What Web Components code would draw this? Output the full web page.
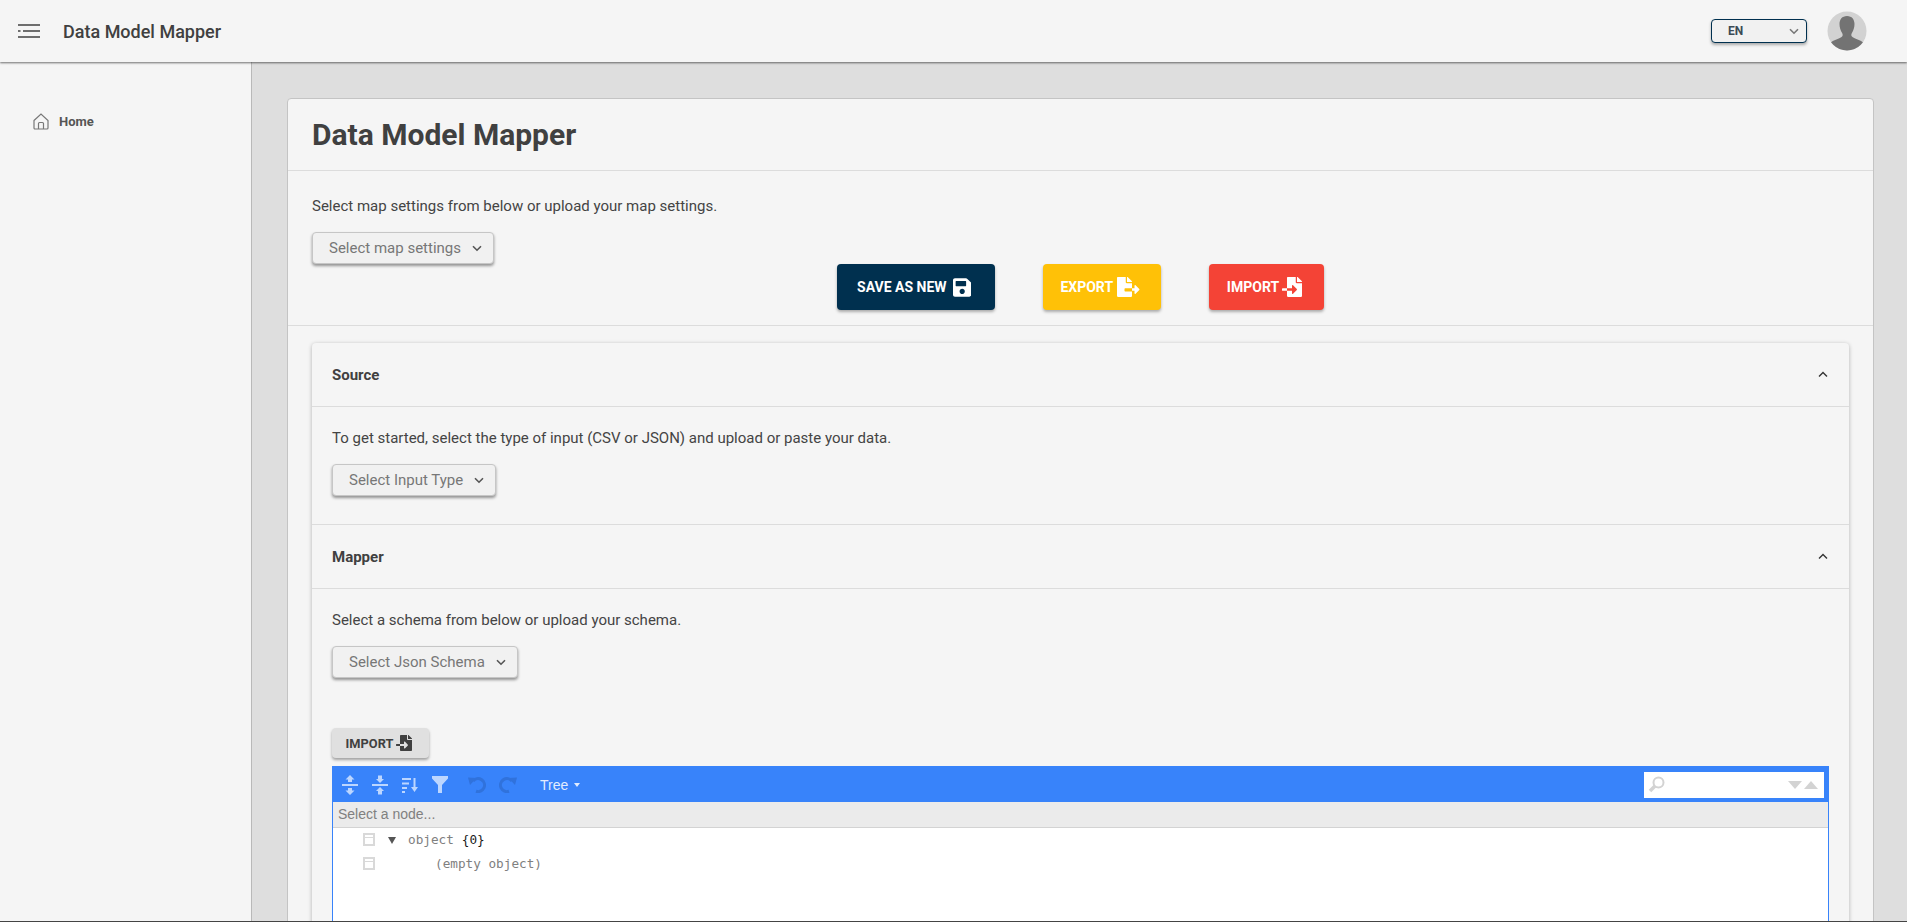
<!DOCTYPE html>
<html lang="en"><head><meta charset="utf-8"><title>Data Model Mapper</title>
<style>
html,body{margin:0;padding:0;height:922px;overflow:hidden;background:#dedede;font-family:Roboto,"Liberation Sans",sans-serif;color:#404040}
</style></head><body>
<app-shell>
  <app-header slot="header" title-text="Data Model Mapper"></app-header>
  <side-nav slot="nav"></side-nav>
  <page-card slot="main" heading="Data Model Mapper">
    <settings-bar></settings-bar>
    <accordion-group>
      <accordion-panel heading="Source" pad-bottom="28">
        <p>To get started, select the type of input (CSV or JSON) and upload or paste your data.</p>
        <select-box label="Select Input Type" width="164"></select-box>
      </accordion-panel>
      <accordion-panel heading="Mapper" pad-bottom="0">
        <p>Select a schema from below or upload your schema.</p>
        <select-box label="Select Json Schema" width="186"></select-box>
        <light-button></light-button>
        <json-editor></json-editor>
      </accordion-panel>
    </accordion-group>
  </page-card>
</app-shell>
<script>
const ICON={
save:['0 0 448 512','M433.941 129.941l-83.882-83.882A48 48 0 0 0 316.118 32H48C21.49 32 0 53.49 0 80v352c0 26.51 21.49 48 48 48h352c26.51 0 48-21.49 48-48V163.882a48 48 0 0 0-14.059-33.941zM224 416c-35.346 0-64-28.654-64-64 0-35.346 28.654-64 64-64s64 28.654 64 64c0 35.346-28.654 64-64 64zm96-304.52V212c0 6.627-5.373 12-12 12H76c-6.627 0-12-5.373-12-12V108c0-6.627 5.373-12 12-12h228.52c3.183 0 6.235 1.264 8.485 3.515l3.48 3.48A11.996 11.996 0 0 1 320 111.48z'],
exp:['0 0 576 512','M384 121.9c0-6.3-2.5-12.4-7-16.9L279.1 7c-4.5-4.5-10.6-7-17-7H256v128h128zM571 308l-95.7-96.4c-10.1-10.1-27.4-3-27.4 11.3V288h-64v64h64v65.2c0 14.3 17.3 21.4 27.4 11.3L571 332c6.6-6.6 6.6-17.4 0-24zm-379 28v-32c0-8.8 7.2-16 16-16h176V160H248c-13.2 0-24-10.8-24-24V0H24C10.7 0 0 10.7 0 24v464c0 13.3 10.7 24 24 24h336c13.3 0 24-10.7 24-24V368H208c-8.8 0-16-7.2-16-16z'],
imp:['0 0 512 512','M16 288c-8.8 0-16 7.2-16 16v32c0 8.8 7.2 16 16 16h112v-64zm489-183L407.1 7c-4.5-4.5-10.6-7-17-7H384v128h128v-6.1c0-6.3-2.5-12.4-7-16.9zm-153 31V0H152c-13.3 0-24 10.7-24 24v264h128v-65.2c0-14.3 17.3-21.4 27.3-11.3L379 308c6.6 6.7 6.6 17.4 0 24l-95.7 96.4c-10.1 10.1-27.4 3-27.4-11.3V352H128v136c0 13.3 10.7 24 24 24h336c13.3 0 24-10.7 24-24V160H376c-13.2 0-24-10.8-24-24z']
};
const icon=(n,h)=>{const [v,d]=ICON[n];const w=h*parseInt(v.split(' ')[2])/512;return `<svg width="${w}" height="${h}" viewBox="${v}" fill="currentColor" aria-hidden="true"><path d="${d}"/></svg>`};
const chevron=(c='#555')=>`<svg width="10" height="7" viewBox="0 0 10 7" fill="none" stroke="${c}" stroke-width="1.6" aria-hidden="true"><path d="M1 1.2l4 4 4-4"/></svg>`;
function def(name,render){customElements.define(name,class extends HTMLElement{connectedCallback(){if(this.shadowRoot)return;const r=this.attachShadow({mode:'open'});r.innerHTML=render(this)}})}

def('app-shell',()=>`<style>
:host{display:grid;grid-template-columns:252px 1fr;grid-template-rows:62px 860px;height:922px;box-sizing:border-box;border-bottom:1px solid #444;overflow:hidden}
.h{grid-column:1/3;position:relative;z-index:2}
.n{position:relative;z-index:1}
.m{min-width:0}
</style><div class="h"><slot name="header"></slot></div><div class="n"><slot name="nav"></slot></div><div class="m"><slot name="main"></slot></div>`);

def('app-header',e=>`<style>
:host{display:flex;align-items:center;height:62px;background:#f5f5f5;box-shadow:0 1px 2px rgba(0,0,0,.55);font-family:Roboto,sans-serif}
.t{font-size:18px;font-weight:500;color:#404040;margin-left:23px;flex:1}
.b{margin-left:18px;display:block}
.l{width:96px;height:24px;box-sizing:border-box;border:1px solid #00304f;border-radius:4px;background:#f1f1f1;display:flex;align-items:center;justify-content:space-between;padding:0 7px 0 16px;font-size:12px;font-weight:700;color:#3c4a55;box-shadow:0 2px 3px rgba(0,0,0,.3)}
.a{margin:0 40px 0 20px;display:block}
</style>
<svg class="b" width="22" height="14" viewBox="0 0 22 14" aria-hidden="true"><g fill="#6e6e6e"><rect width="22" height="2" y="0"/><rect x="0" y="6" width="2.5" height="2"/><rect x="5" y="6" width="17" height="2"/><rect y="12" width="22" height="2"/></g></svg>
<div class="t">${e.getAttribute('title-text')}</div>
<div class="l"><span>EN</span>${chevron('#777')}</div>
<svg class="a" width="40" height="40" viewBox="0 0 40 40" aria-hidden="true"><circle cx="20" cy="20" r="19.5" fill="#d2d2d2"/><clipPath id="c"><circle cx="20" cy="20" r="19.5"/></clipPath><g clip-path="url(#c)" fill="#737373"><path d="M20 5c-5 0-7.5 3.6-7.5 8 0 3.4 1 6.6 2.6 9 .8 1.2.8 2.7 0 3.6-1.8 2-9.6 3.8-11.6 6.4L3 40h34l-.5-8c-2-2.6-9.8-4.4-11.6-6.4-.8-.9-.8-2.4 0-3.6 1.6-2.4 2.6-5.6 2.6-9 0-4.4-2.5-8-7.5-8z"/></g></svg>`);

def('side-nav',()=>`<style>
:host{display:block;height:860px;box-sizing:border-box;background:#f5f5f5;border-right:1px solid #b9b9b9;padding:51px 0 0 33px;font-family:Roboto,sans-serif}
.r{display:flex;align-items:center;gap:10px;font-size:13px;font-weight:700;color:#555}
svg{display:block}
</style><div class="r"><svg width="16" height="17" viewBox="0 0 16 17" fill="none" stroke="#777" stroke-width="1.2" aria-hidden="true"><path d="M1 7.5L8 1l7 6.5V15a1 1 0 0 1-1 1H2a1 1 0 0 1-1-1z"/><path d="M5.5 16v-5.5a1 1 0 0 1 1-1h3a1 1 0 0 1 1 1V16"/></svg><span>Home</span></div>`);

def('page-card',e=>`<style>
:host{display:block;box-sizing:border-box;margin:36px 33px 0 35px;height:900px;background:#f5f5f5;border:1px solid #c4c4c4;border-radius:4px;font-family:Roboto,sans-serif}
h1{margin:0;height:72px;box-sizing:border-box;padding:0 24px;display:flex;align-items:center;font-size:30px;font-weight:700;color:#404040;border-bottom:1px solid #dcdcdc}
</style><h1>${e.getAttribute('heading')}</h1><slot></slot>`);

def('settings-bar',()=>`<style>
:host{display:block;padding:25px 24px 0;height:155px;box-sizing:border-box;border-bottom:1px solid #dcdcdc;font-family:Roboto,sans-serif}
p{margin:0 0 16px;font-size:15px;line-height:20px;color:#444}
.row{display:flex;justify-content:center;gap:48px}
</style><p>Select map settings from below or upload your map settings.</p>
<select-box label="Select map settings" width="182"></select-box>
<div class="row">
<action-button bg="#00304f" w="158" text="SAVE AS NEW" icon="save" gap="6" ih="21"></action-button>
<action-button bg="#ffc107" w="118" text="EXPORT" icon="exp" gap="4" ih="20"></action-button>
<action-button bg="#f44336" w="115" text="IMPORT" icon="imp" gap="3" ih="20"></action-button>
</div>`);

def('select-box',e=>`<style>
:host{display:block;width:${e.getAttribute('width')}px;height:32px;box-sizing:border-box;border:1px solid #c6c6c6;border-radius:4px;background:#f1f1f1;box-shadow:0 2px 3px rgba(0,0,0,.4);font-family:Roboto,sans-serif}
.i{display:flex;height:100%;align-items:center;justify-content:space-between;padding:0 11px 0 16px;font-size:15px;color:#777}
</style><div class="i"><span>${e.getAttribute('label')}</span>${chevron('#555')}</div>`);

def('action-button',e=>`<style>
:host{display:flex;align-items:center;justify-content:center;box-sizing:border-box;padding-right:4px;gap:${e.getAttribute('gap')}px;width:${e.getAttribute('w')}px;height:46px;background:${e.getAttribute('bg')};color:#fff;border-radius:4px;box-shadow:0 2px 3px rgba(0,0,0,.3);font:700 14px Roboto,sans-serif}
svg{display:block}
</style><span>${e.getAttribute('text')}</span>${icon(e.getAttribute('icon'),+e.getAttribute('ih'))}`);

def('light-button',()=>`<style>
:host{display:flex;align-items:center;justify-content:center;box-sizing:border-box;padding-right:3px;gap:3px;width:97px;height:30px;background:#e0e0e0;color:#404040;border-radius:4px;box-shadow:0 2px 3px rgba(0,0,0,.35);font:700 12.8px Roboto,sans-serif;margin-top:50px}
svg{display:block}
</style><span>IMPORT</span>${icon('imp',16)}`);

def('accordion-group',()=>`<style>
:host{display:block;margin:17px 24px 0 24px;background:#f5f5f5;border-radius:4px;box-shadow:0 1px 4px rgba(0,0,0,.28);font-family:Roboto,sans-serif}
</style><slot></slot>`);

def('accordion-panel',e=>`<style>
:host{display:block;border-bottom:1px solid #dcdcdc}
:host(:last-child){border-bottom:0}
.h{height:64px;box-sizing:border-box;border-bottom:1px solid #dcdcdc;padding:0 21px 0 20px;display:flex;align-items:center;justify-content:space-between;font-size:15px;font-weight:700;color:#404040}
.b{padding:20px 20px ${e.getAttribute('pad-bottom')}px 20px}
::slotted(p){margin:0 0 15px;font-size:15px;line-height:22px;color:#444}
</style><div class="h"><span>${e.getAttribute('heading')}</span><svg width="10" height="7" viewBox="0 0 10 7" fill="none" stroke="#333" stroke-width="1.4" aria-hidden="true"><path d="M1 5.5l4-4 4 4"/></svg></div><div class="b"><slot></slot></div>`);

def('json-editor',()=>`<style>
:host{display:block;margin-top:8px;height:400px;box-sizing:border-box;border:1px solid #3883fa;background:#fff;font-family:"Liberation Sans",Arial,sans-serif}
.bar{height:35px;background:#3883fa;margin:0 -1px 0;display:flex;align-items:center;padding-left:10px}
.bar svg{display:block;flex:none}
.tree-btn{color:#fff;opacity:.85;font-size:14px;margin-left:23px;display:flex;align-items:center;gap:6px}
.caret{width:0;height:0;border:3px solid transparent;border-top:4px solid #fff;border-bottom:0}
.search{margin-left:auto;margin-right:5px;width:180px;height:26px;background:#fff;display:flex;align-items:center;justify-content:space-between;padding:0 6px 0 4px;box-sizing:border-box}
.arrows{display:flex;gap:2px}
.nav{height:26px;box-sizing:border-box;background:#ebebeb;border-bottom:1px solid #d3d3d3;color:#808080;font-size:14px;line-height:25px;padding-left:5px}
.tree{margin-top:-1px}
.row{height:24px;display:flex;align-items:center;font:12.7px "DejaVu Sans Mono",monospace;color:#808080;padding-left:30px}
.cb{width:8px;height:9px;border:2px solid #d9d9d9;background:linear-gradient(#d9d9d9,#d9d9d9) 0 2px/100% 1px no-repeat;flex:none}
.tri{width:0;height:0;border:4.5px solid transparent;border-top:7px solid #555;border-bottom:0;margin:2px 0 0 13px;flex:none}
.key{margin-left:12px}
.n{color:#1a1a1a;margin-left:8px}
.e{margin-left:60px}
</style>
<div class="bar">
<svg width="16" height="22" viewBox="0 0 16 22" fill="#bcd6ff" aria-hidden="true"><path d="M8 1l4.5 4.5H10V8H6V5.5H3.5zM8 21l4.5-4.500H10V14H6v2.500H3.500z"/><rect y="10" width="16" height="2"/></svg>
<svg style="margin-left:14px" width="16" height="22" viewBox="0 0 16 22" fill="#bcd6ff" aria-hidden="true"><path d="M8 9l4-4H10V1.500H6V5H4zM8 13l4 4H10v3.500H6V17H4z"/><rect y="10" width="16" height="2"/></svg>
<svg style="margin-left:14px" width="16" height="18" viewBox="0 0 16 18" fill="#bcd6ff" aria-hidden="true"><rect y="2" width="9" height="2"/><rect y="6.5" width="7" height="2"/><rect y="11" width="5" height="2"/><rect y="15" width="3" height="2"/><path d="M11.500 2h2v9h2.500l-3.500 5-3.500-5h2.500z"/></svg>
<svg style="margin-left:14px" width="16" height="17" viewBox="0 0 16 17" fill="#bcd6ff" aria-hidden="true"><path d="M0 0h16v2.5L10 9v8H6V9L0 2.5z"/></svg>
<svg style="margin-left:20px" width="18" height="17" viewBox="0 0 18 17" fill="none" stroke="#3072dc" stroke-width="3" aria-hidden="true"><path d="M5 5A6.5 6.5 0 1 1 8 15.300"/><path d="M0 1.500l8.500.5L2 9z" fill="#3072dc" stroke="none"/></svg>
<svg style="margin-left:13px" width="18" height="17" viewBox="0 0 18 17" fill="none" stroke="#3072dc" stroke-width="3" aria-hidden="true"><path d="M13 5A6.500 6.500 0 1 0 10 15.300"/><path d="M18 1.500L9.500 2l6.500 7z" fill="#3072dc" stroke="none"/></svg>
<div class="tree-btn"><span>Tree</span><i class="caret"></i></div>
<div class="search"><svg width="17" height="17" viewBox="0 0 17 17" fill="none" stroke="#d3d3d3" aria-hidden="true"><circle cx="10.5" cy="6.5" r="5" stroke-width="2"/><path d="M7 10L2 15" stroke-width="3.5"/></svg>
<div class="arrows"><svg width="14" height="8" viewBox="0 0 14 8" fill="#d3d3d3" aria-hidden="true"><path d="M0 0h14L7 8z"/></svg><svg width="14" height="8" viewBox="0 0 14 8" fill="#d3d3d3" aria-hidden="true"><path d="M0 8h14L7 0z"/></svg></div></div>
</div>
<div class="nav">Select a node...</div>
<div class="tree">
<div class="row"><i class="cb"></i><i class="tri"></i><span class="key">object</span><span class="n">{0}</span></div>
<div class="row"><i class="cb"></i><span class="e">(empty object)</span></div>
</div>`);
</script>
</body></html>
